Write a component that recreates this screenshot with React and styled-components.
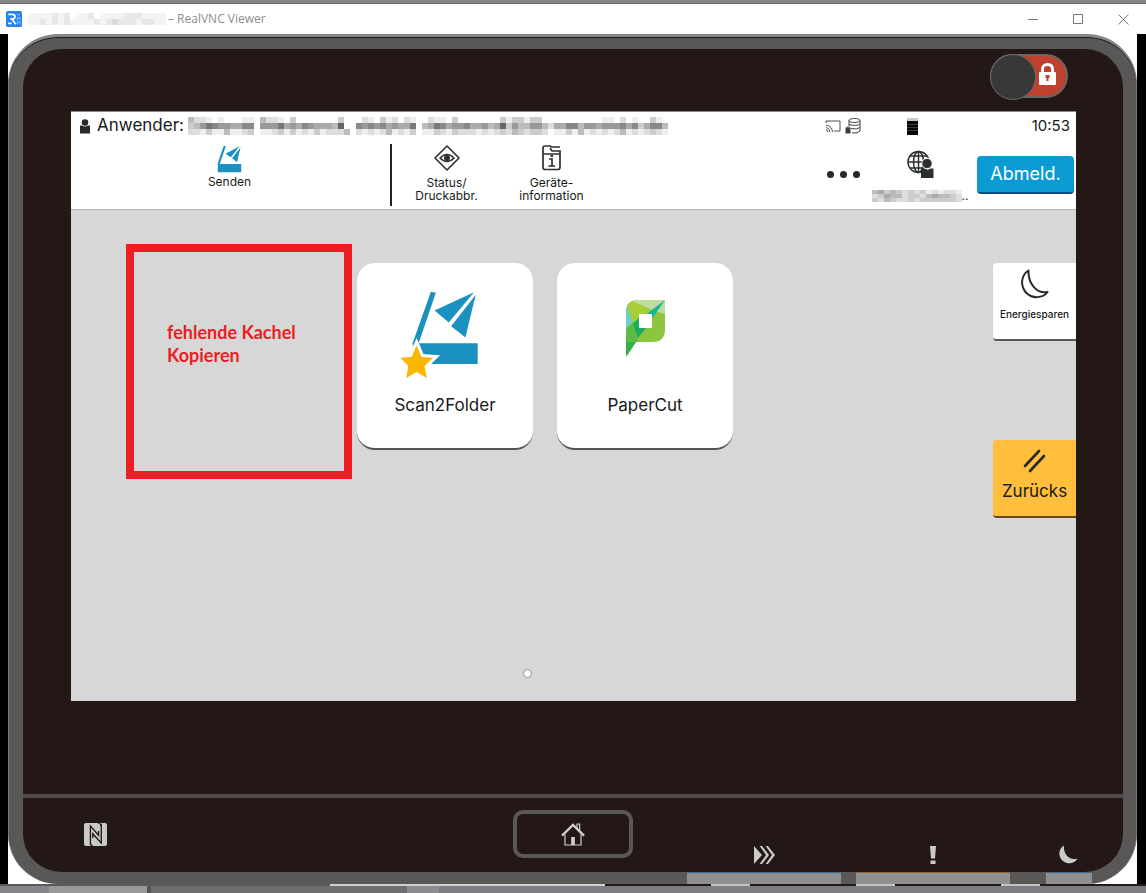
import React, { useState } from "react";
import styled, { createGlobalStyle } from "styled-components";

const GlobalStyle = createGlobalStyle`
  * {
    box-sizing: border-box;
  }

  body {
    margin: 0;
    background: #ffffff;
    font-family: Inter, "Liberation Sans", sans-serif;
    color: #161a18;
  }

  button {
    font: inherit;
    color: inherit;
    border: 0;
    padding: 0;
    background: none;
    cursor: pointer;
  }

  svg {
    display: block;
  }
`;

// one hex digit per cell, f = nearly white
const userName = [
  "bddefefffeefbddefcfffffffcfffdefcedfdeffdeefcfffffffcecceccffffffffffeefdfeffcef",
  "cb97899aa88f9997a9a89aaab6ff89898a9aa7fba78a998aa9ba6c9bb99bdaa88b99a9998a8ca88b",
  "ddeceebeedcfeedcecedecedddbfdededbedecfeecdecdddededcdbcdccdfeecebedededbededcde",
];
const hostName = ["eeeededfeedfeeeedddeeee", "eedededeeeededcdddeddee"];
const accountName = ["bacbcdcdcededde", "dcabbdccdbabbcd", "cdbcddcdccccccd"];

function Mosaic({ rows, size, cellHeight = size }) {
  const cols = rows[0].length;
  return (
    <svg
      width={cols * size}
      height={rows.length * cellHeight}
      shapeRendering="crispEdges"
      aria-hidden="true"
    >
      {rows.map((row, y) =>
        row.split("").map((c, x) =>
          c === "f" ? null : (
            <rect
              key={`${x}-${y}`}
              x={x * size}
              y={y * cellHeight}
              width={size}
              height={cellHeight}
              fill={`#${c}${c}${c}`}
            />
          )
        )
      )}
    </svg>
  );
}

const VncLogo = () => (
  <svg width="16" height="16" viewBox="0 0 48 48">
    <rect width="48" height="48" rx="5" fill="#2585f0" />
    <path d="M7 10H19Q27 10 27 17Q27 23 19 24H12M18 24L29 40M6 37H17" fill="none" stroke="#fff" strokeWidth="5" />
    <path d="M33 8L37 13L43 8M34 28V20H42V28M43 40V33H34V40" fill="none" stroke="#cfe4ff" strokeWidth="2" />
  </svg>
);

const SendIcon = () => (
  <svg width="25" height="28" viewBox="652 434 76 86" fill="#1a91bf">
    <path d="M672 437H679L660 492H726V518H654V490Z" />
    <path d="M678 461L721 438L694 472Z" />
    <path d="M724 441L713 487L698 475Z" />
  </svg>
);

const ScanIcon = () => (
  <svg width="88" height="97" viewBox="165 140 265 290" fill="#1a91bf">
    <path d="M273 153L288 156L235 312L218 316V308Z" />
    <path d="M235 308H414V371H235Z" />
    <path d="M284 210L403 155L327 246Z" />
    <path d="M408 162L377 291L334 257Z" />
    <path
      d="M230 315L245 350L280 352L254 377L261 413L230 395L199 413L205 377L181 352L215 350Z"
      fill="#f9b700"
      stroke="#fff"
      strokeWidth="18"
      paintOrder="stroke"
    />
  </svg>
);

const PaperCutLogo = () => (
  <svg width="39" height="56" viewBox="856 180 117 168">
    <path d="M856 217Q856 180 892 180H973V268Q973 306 935 306H886L858 348L856 346Z" fill="#8cc63f" />
    <path d="M874 184Q882 180 892 180H973V222L938 212Z" fill="#bfdc9c" />
    <path d="M861 200Q865 190 874 184L940 212L922 224H896V240L876 250Z" fill="#a6ce39" />
    <path d="M861 200L876 246L856 266V217Q856 208 861 200Z" fill="#6fcfc4" />
    <path d="M973 180L918 222H934V236Z" fill="#14b39a" />
    <path d="M856 266L896 234V264L890 306H856Z" fill="#5cba47" />
    <path d="M876 250L896 234V264H916L892 294Z" fill="#1aae5a" />
    <path d="M856 306H886L858 348L856 346Z" fill="#34b04a" />
    <path d="M895 222H934V264H895Z" fill="#fff" />
  </svg>
);

const PersonIcon = () => (
  <svg width="10" height="15" viewBox="0 0 10 15" fill="#252928">
    <circle cx="5" cy="3.5" r="3.3" />
    <path d="M0 6.500H2Q5 8.500 8 6.500H10V14.500H0Z" />
  </svg>
);

const StatusIcon = () => (
  <svg width="26" height="26" viewBox="0 0 26 26" fill="none" stroke="#2c302e" strokeWidth="1.600">
    <path d="M13 1L25 13L13 25L1 13Z" strokeLinejoin="round" />
    <path d="M6 13Q13 6 20 13Q13 20 6 13Z" />
    <circle cx="13" cy="13" r="2.200" fill="#2c302e" />
  </svg>
);

const DeviceInfoIcon = () => (
  <svg width="19" height="26" viewBox="0 0 19 26" fill="none" stroke="#2c302e" strokeWidth="1.700">
    <path d="M18 2H10L8 1H3Q1 1 1 3V22Q1 24.500 3 24.500H16Q18 24.500 18 22V6H10L8 3" />
    <path d="M1 9H18M7 14H10V21M6.500 21H13" />
    <path d="M8.500 11H11" strokeWidth="2" />
  </svg>
);

const CastIcon = () => (
  <svg width="16" height="13" viewBox="0 0 16 13" fill="none" stroke="#4a4e4c" strokeWidth="1">
    <path d="M1 3V1H15V11H9" />
    <path d="M1 5Q7 6 7.500 12M1 7.500Q4.500 8 5 12M1 10Q2.500 10 3 12" />
  </svg>
);

const StorageIcon = () => (
  <svg width="16" height="16" viewBox="0 0 16 16" fill="none" stroke="#3c403e" strokeWidth="1">
    <ellipse cx="9.500" cy="2.500" rx="5.500" ry="2" />
    <path d="M4 2.500V8M15 2.500V13Q13 15.500 7 15M15 6Q12 8.500 4 6.500M15 9.500Q12 12 6 10.500" />
    <rect x="1" y="10" width="4" height="5" fill="#3c403e" />
    <path d="M1.500 10Q3 7 4.500 10" />
  </svg>
);

const TonerIcon = () => (
  <svg width="11" height="17" viewBox="0 0 11 17">
    <rect width="11" height="4" fill="#c9c9c9" />
    <rect y="3" width="11" height="14" fill="#060606" />
    <path d="M0 6.500H11M0 9.500H11M0 12.500H11" stroke="#3a3a3a" strokeWidth="1" />
  </svg>
);

const GlobeUserIcon = () => (
  <svg width="27" height="28" viewBox="0 0 27 28" fill="none" stroke="#2b2f2d" strokeWidth="1.500">
    <circle cx="11.500" cy="12" r="10.500" />
    <ellipse cx="11.500" cy="12" rx="5" ry="10.500" />
    <path d="M11.500 1V23M1 12H22M3 6H20M3 18H20" />
    <circle cx="20" cy="13.500" r="5.200" fill="#2b2f2d" stroke="#fff" strokeWidth="1" />
    <path d="M14 18.500H16.500Q20 21 23.500 18.500H26.500V28H14Z" fill="#2b2f2d" stroke="none" />
  </svg>
);

const MoonOutline = () => (
  <svg width="28" height="30" viewBox="0 0 28 30" fill="none" stroke="#262b29" strokeWidth="2">
    <path d="M7.500 1.500C0 6 -1 17 5 23.500C11 30 22 29.500 26.500 23C16 25 7 15 7.500 1.500Z" strokeLinejoin="round" />
  </svg>
);

const ResetIcon = () => (
  <svg width="23" height="24" viewBox="0 0 23 24" stroke="#262b29" strokeWidth="2.600" strokeLinecap="round">
    <path d="M2 17L16 2M7 22L21 7" />
  </svg>
);

const LockIcon = () => (
  <svg width="17" height="22" viewBox="0 0 17 22">
    <path d="M3.500 10V6.500Q3.500 1.500 8.500 1.500T13.500 6.500V10" fill="none" stroke="#fff" strokeWidth="2.800" />
    <rect y="9" width="17" height="13" rx="1" fill="#fff" />
    <path d="M6.500 12H10.500V15H9.500V18H7.500V15H6.500Z" fill="#be402f" />
  </svg>
);

const NfcIcon = () => (
  <svg width="23" height="23" viewBox="0 0 68 68">
    <rect width="68" height="68" rx="6" fill="#c9c9c9" />
    <path d="M19 66V9L43 36V24M26 44V32L51 59V2" fill="none" stroke="#241816" strokeWidth="4" />
    <path d="M42 0Q50 2 51 10M19 58Q19 66 26 68" fill="none" stroke="#241816" strokeWidth="3" />
  </svg>
);

const HomeIcon = () => (
  <svg width="24" height="23" viewBox="0 0 72 69" fill="none" stroke="#cfcfcf">
    <path d="M3 38L36 6L69 38" strokeWidth="7" />
    <path d="M12 34V66H60V34M48 16V3H56V24" strokeWidth="3.500" />
    <path d="M36 42V66" strokeWidth="11" />
  </svg>
);

const ForwardIcon = () => (
  <svg width="21" height="18" viewBox="0 0 63 54" fill="#cbcbcb">
    <path d="M0 0L24 27L0 54Z" />
    <path d="M17 0H24L45 27L24 54H17L36 27Z" />
    <path d="M35 0H42L63 27L42 54H35L54 27Z" />
  </svg>
);

const AlertIcon = () => (
  <svg width="6" height="18" viewBox="0 0 6 18" fill="#cbcbcb">
    <path d="M0 0H6L5 12.500H1Z" />
    <rect x="0.500" y="14.500" width="5" height="3.500" />
  </svg>
);

const MoonIcon = () => (
  <svg width="19" height="19" viewBox="0 0 19 19" fill="#cbcbcb">
    <path d="M5 0.500C-1 4 -1 12 4 16C9 20 16 18.500 18.500 13.500C10 16 4 9 5 0.500Z" />
  </svg>
);

const Window = styled.div`
  min-height: 100vh;
  display: flex;
  flex-direction: column;
`;

const TopEdge = styled.div`
  height: 4px;
  background: #85858a;
  border-bottom: 1px solid #6b6b6b;
`;

const TitleBar = styled.header`
  height: 30px;
  display: flex;
  align-items: center;
  padding-left: 6px;
  background: #ffffff;
`;

const HostName = styled.span`
  margin: 0 2px 0 6px;
  opacity: 0.7;
`;

const WindowTitle = styled.h1`
  margin: 0;
  font-family: "Open Sans", "Noto Sans", sans-serif;
  font-size: 12px;
  line-height: 16px;
  font-weight: 400;
  color: #8c8c8c;
`;

const WindowControls = styled.div`
  display: flex;
  margin-left: auto;

  button {
    width: 45px;
    height: 28px;
    display: grid;
    place-items: center;
  }
`;

const Stage = styled.main`
  flex: 1;
  display: flex;
  padding: 0 9px 0 8px;
  background: #ffffff;
  box-shadow: inset 8px 0 #000000, inset -9px 0 #000000;
`;

const Device = styled.section`
  position: relative;
  flex: 1;
  display: flex;
  flex-direction: column;
  border: 1px solid #777777;
  border-top: 3px solid #858585;
  border-bottom: 0;
  border-radius: 50px;
  background: #595856;
  box-shadow: inset 0 1px #1c1a1a;
  padding: 12px 13px 0 14px;
  overflow: hidden;
`;

/* strip that lies across the top edge of the housing */
const TopNotch = styled.div`
  position: absolute;
  top: -3px;
  left: 37%;
  width: 26%;
  height: 2px;
  background: #ffffff;
`;

const Panel = styled.div`
  flex: 1;
  display: flex;
  flex-direction: column;
  border-radius: 38px;
  background: #241816;
`;

const LockRow = styled.div`
  height: 62px;
  display: flex;
  justify-content: flex-end;
  padding: 5px 55px 0 0;
`;

const LockSwitch = styled.label`
  position: relative;
  width: 78px;
  height: 44px;

  input {
    appearance: none;
    margin: 0;
    display: block;
    width: 78px;
    height: 44px;
    border: 2px solid #6a6664;
    border-radius: 22px;
    background: #be402f;
    cursor: pointer;
  }

  input::before {
    content: "";
    display: block;
    width: 44px;
    height: 44px;
    margin: -2px;
    border: 1px solid #6a6a6a;
    border-radius: 50%;
    background: #383838;
  }

  svg {
    position: absolute;
    top: 9px;
    right: 12px;
    pointer-events: none;
  }
`;

const Screen = styled.div`
  flex: 1;
  display: flex;
  flex-direction: column;
  margin: 0 47px 0 48px;
  border-top: 1px solid #8d8988;
  background: #d7d7d7;
`;

const ScreenHeader = styled.header`
  height: 98px;
  background: #ffffff;
  border-bottom: 1px solid #b4b4b4;
`;

const StatusRow = styled.div`
  height: 28px;
  display: flex;
  align-items: center;
  padding: 0 6px 0 9px;
`;

const UserLabel = styled.span`
  margin: 0 4px 2px 7px;
  font-size: 17px;
  line-height: 20px;
`;

const StatusIcons = styled.div`
  display: flex;
  align-items: center;
  gap: 4px;
  margin-left: auto;

  svg:last-child {
    margin-left: 42px;
  }
`;

const Clock = styled.time`
  width: 152px;
  text-align: right;
  font-size: 15px;
  line-height: 20px;
`;

const NavRow = styled.nav`
  height: 69px;
  display: flex;
  align-items: flex-start;
`;

const NavGroup = styled.div`
  width: 319px;
  display: flex;
  justify-content: center;
  padding-right: 2px;
`;

const NavButton = styled.button`
  width: 105px;
  display: flex;
  flex-direction: column;
  align-items: center;
  gap: ${(props) => (props.$tight ? 2 : 5)}px;
  padding-top: 5px;
  font-size: 12px;
  line-height: 13px;
`;

const Divider = styled.div`
  width: 2px;
  height: 62px;
  margin: 4px 2px 0 0;
  background: #1e2220;
`;

const NavEnd = styled.div`
  display: flex;
  align-items: flex-start;
  margin-left: auto;
`;

const MoreButton = styled.button`
  display: flex;
  gap: 6px;
  padding: 31px 7px 0 0;

  span {
    width: 7px;
    height: 7px;
    border-radius: 50%;
    background: #252928;
  }
`;

const AccountButton = styled.button`
  width: 106px;
  display: flex;
  flex-direction: column;
  align-items: center;
  gap: 12px;
  padding-top: 10px;

  div {
    display: flex;
    align-items: flex-end;
    font-size: 12px;
    line-height: 12px;
  }
`;

const LogoutButton = styled.button`
  width: 97px;
  height: 38px;
  margin: 16px 2px 0 4px;
  border-radius: 4px;
  border-bottom: 2px solid #034d80;
  background: #0c9ad2;
  color: #ffffff;
  font-size: 18px;
  line-height: 20px;
`;

const Home = styled.div`
  flex: 1;
  display: flex;
  align-items: flex-start;
  padding-left: 55px;
`;

const MissingTile = styled.div`
  width: 226px;
  height: 235px;
  margin: 34px 5px 0 0;
  padding: 69px 24px 0 33px;
  border: 8px solid #ee1c25;
  color: #ee1c25;
  font-family: Lato, "Liberation Sans", sans-serif;
  font-size: 18px;
  line-height: 23px;
  font-weight: 700;
`;

const Tiles = styled.div`
  display: flex;
  gap: 24px;
  padding-top: 53px;
`;

const Tile = styled.button`
  width: 176px;
  height: 187px;
  display: flex;
  flex-direction: column;
  justify-content: space-between;
  align-items: center;
  padding: 24px 0 33px;
  border-radius: 18px;
  border-bottom: 2px solid #555555;
  background: #ffffff;
  font-size: 17px;
  line-height: 20px;
`;

const TileArt = styled.span`
  height: 97px;
  display: grid;
  place-items: center;
  padding-right: ${(props) => props.$shift || 0}px;
  padding-bottom: ${(props) => props.$lift || 0}px;
`;

const SideKeys = styled.div`
  width: 83px;
  display: flex;
  flex-direction: column;
  gap: 99px;
  margin-left: auto;
  padding-top: 53px;
`;

const SideKey = styled.button`
  height: 78px;
  display: flex;
  flex-direction: column;
  align-items: center;
  gap: ${(props) => (props.$small ? 5 : 8)}px;
  padding-top: ${(props) => (props.$small ? 6 : 9)}px;
  border-radius: 4px 0 0 4px;
  border-bottom: 2px solid ${(props) => props.$edge};
  background: ${(props) => props.$bg};
  font-size: ${(props) => (props.$small ? 10 : 17)}px;
  font-weight: ${(props) => (props.$small ? 500 : 400)};
  line-height: 20px;
`;

const Pager = styled.div`
  display: flex;
  justify-content: center;
  padding: 0 93px 23px 0;

  span {
    width: 9px;
    height: 9px;
    border: 1px solid #8f8f8f;
    border-radius: 50%;
    background: #ffffff;
  }
`;

const KeyBar = styled.footer`
  height: 78px;
  margin-top: 93px;
  display: grid;
  grid-template-columns: 1fr 120px 1fr;
  border-top: 4px solid #4e4a4b;
`;

const NfcSpot = styled.div`
  padding: 25px 0 0 61px;
`;

const HomeKey = styled.button`
  height: 48px;
  margin-top: 12px;
  display: grid;
  place-items: center;
  border: 4px solid #595856;
  border-radius: 10px;
`;

const Indicators = styled.div`
  display: flex;
  justify-content: flex-end;
  align-items: flex-end;
  padding: 0 45px 8px 0;

  svg:first-child {
    margin-right: 155px;
  }

  svg:last-child {
    margin-left: 123px;
  }
`;

const LightBar = styled.div`
  height: 12px;
  display: flex;
  justify-content: flex-end;
  padding-right: 31px;
`;

const Light = styled.div`
  width: ${(props) => props.$width}px;
  margin-left: ${(props) => props.$gap || 0}px;
  border-top: 1px solid ${(props) => props.$color};
  background: #8f8f8f;
`;

const BottomEdge = styled.div`
  height: 9px;
  border-top: 2px solid #58595a;
  background: linear-gradient(
    to right,
    #85848a 0 49px,
    #98989a 49px 147px,
    #555555 147px 151px,
    #6e6e71 151px 407px,
    #8b8b90 407px 439px,
    #7d7c82 439px
  );
`;

const EdgeLine = styled.div`
  height: 2px;
  margin-top: -2px;
  background: linear-gradient(
    to right,
    transparent 0 330px,
    #d0d0d0 330px 605px,
    #241816 605px 711px,
    #c4c4c4 711px 750px,
    #241816 750px 856px,
    #c4c4c4 856px 895px,
    #241816 895px 1001px,
    #c4c4c4 1001px 1040px,
    #241816 1040px
  );
`;

function App() {
  const [locked, setLocked] = useState(false);

  return (
    <Window>
      <GlobalStyle />
      <TopEdge />
      <TitleBar>
        <VncLogo />
        <HostName>
          <Mosaic rows={hostName} size={6} />
        </HostName>
        <WindowTitle>– RealVNC Viewer</WindowTitle>
        <WindowControls>
          <button aria-label="Minimieren">
            <svg width="11" height="11" stroke="#777">
              <path d="M0 5.500H10" />
            </svg>
          </button>
          <button aria-label="Maximieren">
            <svg width="11" height="11" stroke="#777" fill="none">
              <path d="M0.500 0.500H9.500V9.500H0.500Z" />
            </svg>
          </button>
          <button aria-label="Schließen">
            <svg width="11" height="11" stroke="#777">
              <path d="M0.500 0.500L10.500 10.500M10.500 0.500L0.500 10.500" />
            </svg>
          </button>
        </WindowControls>
      </TitleBar>

      <Stage>
        <Device>
          <TopNotch />
          <Panel>
            <LockRow>
              <LockSwitch>
                <input
                  type="checkbox"
                  role="switch"
                  aria-label="Sperre"
                  checked={locked}
                  onChange={() => setLocked(!locked)}
                />
                <LockIcon />
              </LockSwitch>
            </LockRow>

            <Screen>
              <ScreenHeader>
                <StatusRow>
                  <PersonIcon />
                  <UserLabel>Anwender:</UserLabel>
                  <Mosaic rows={userName} size={6} />
                  <StatusIcons>
                    <CastIcon />
                    <StorageIcon />
                    <TonerIcon />
                  </StatusIcons>
                  <Clock>10:53</Clock>
                </StatusRow>
                <NavRow>
                  <NavGroup>
                    <NavButton $tight>
                      <SendIcon />
                      Senden
                    </NavButton>
                  </NavGroup>
                  <Divider />
                  <NavButton>
                    <StatusIcon />
                    <span>
                      Status/
                      <br />
                      Druckabbr.
                    </span>
                  </NavButton>
                  <NavButton>
                    <DeviceInfoIcon />
                    <span>
                      Geräte-
                      <br />
                      information
                    </span>
                  </NavButton>
                  <NavEnd>
                    <MoreButton aria-label="Mehr">
                      <span />
                      <span />
                      <span />
                    </MoreButton>
                    <AccountButton aria-label="Konto">
                      <GlobeUserIcon />
                      <div>
                        <Mosaic rows={accountName} size={6} cellHeight={4} />
                        ..
                      </div>
                    </AccountButton>
                    <LogoutButton>Abmeld.</LogoutButton>
                  </NavEnd>
                </NavRow>
              </ScreenHeader>

              <Home>
                <MissingTile>
                  fehlende Kachel
                  <br />
                  Kopieren
                </MissingTile>
                <Tiles>
                  <Tile>
                    <TileArt $shift={12}>
                      <ScanIcon />
                    </TileArt>
                    Scan2Folder
                  </Tile>
                  <Tile>
                    <TileArt $lift={16}>
                      <PaperCutLogo />
                    </TileArt>
                    PaperCut
                  </Tile>
                </Tiles>
                <SideKeys>
                  <SideKey $small $bg="#ffffff" $edge="#565656">
                    <MoonOutline />
                    Energiesparen
                  </SideKey>
                  <SideKey $bg="#ffbe3b" $edge="#5f4a1c">
                    <ResetIcon />
                    Zurücks
                  </SideKey>
                </SideKeys>
              </Home>
              <Pager>
                <span />
              </Pager>
            </Screen>

            <KeyBar>
              <NfcSpot>
                <NfcIcon />
              </NfcSpot>
              <HomeKey aria-label="Startseite">
                <HomeIcon />
              </HomeKey>
              <Indicators>
                <ForwardIcon />
                <AlertIcon />
                <MoonIcon />
              </Indicators>
            </KeyBar>
          </Panel>
          <LightBar>
            <Light $width={154} $color="#3e6a8c" />
            <Light $width={154} $gap={15} $color="#94652c" />
            <Light $width={46} $gap={36} $color="#3e6a8c" />
          </LightBar>
        </Device>
      </Stage>
      <BottomEdge>
        <EdgeLine />
      </BottomEdge>
    </Window>
  );
}

export default App;
